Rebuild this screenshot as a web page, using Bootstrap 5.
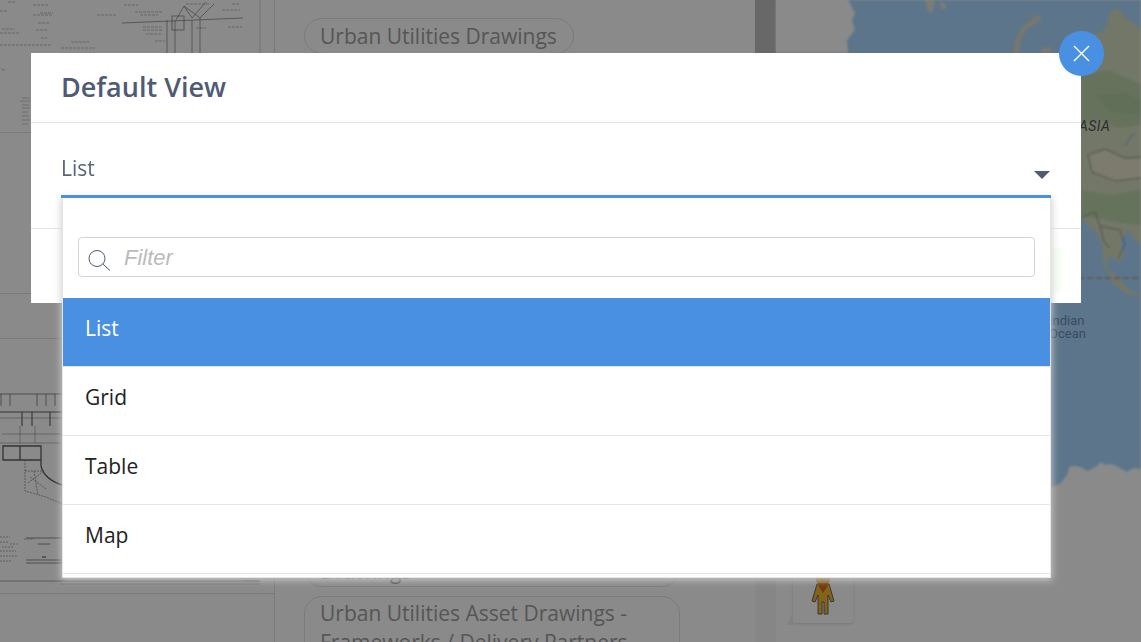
<!DOCTYPE html>
<html lang="en">
<head>
<meta charset="utf-8">
<title>Default View</title>
<link href="https://cdn.jsdelivr.net/npm/bootstrap@5.3.0/dist/css/bootstrap.min.css" rel="stylesheet">
<style>
html,body{height:100%;overflow:hidden}
body{font-family:"Open Sans",sans-serif;background:#fff}
.stage{height:642px;overflow:hidden}
.drawcol{width:275px;flex:none;border-right:1px solid #e2e2e2}
.sheet{border-bottom:1px solid #e2e2e2;overflow:hidden}
.sheet svg{display:block;filter:blur(.7px)}
.mapcol svg.mapsheet{display:block;filter:blur(.9px)}
.sheet-a{height:133px}
.sheet-b{height:161px}
.sheet-c{height:256px;margin-top:44px;border-top:1px solid #e2e2e2}
.pillcol{width:480px;flex:none;padding:18px 0 0 29px}
.tagpill{border:1px solid #e4e4e4;border-radius:18px;padding:2px 15px;font-size:21px;line-height:30px;color:#a0a0a0}
.tagpill-one{width:270px}
.tagpill-two{width:376px;height:60px;margin-top:473px;padding-top:0}
.tagpill-three{width:376px;margin-top:9px;padding-top:2px;line-height:29px}
.tagpill-two span{display:block;padding-top:29px;line-height:29px}
.scrolltrack{width:21px;flex:none;background:#f7f7f7}
.scrollthumb{height:300px;background:#c1c1c1}
.mapcol{flex:1 1 auto;position:relative;background:#fff}
.backdrop-layer{--bs-backdrop-opacity:.46;--bs-backdrop-bg:#000;width:100%;height:100%}
.viewdialog{max-width:1050px;margin:53px 0 0 31px}
.viewdialog .modal-content{height:250px;border:0;border-radius:0;color:#4f5a75}
.viewhead{height:70px;padding:0 30px 2px;border-bottom:1px solid #e5e5e5;border-radius:0}
.viewhead .modal-title{font-size:27px;font-weight:600;line-height:1;color:#4f5a75}
.viewbody{height:105px;flex:none;padding:0 30px}
.viewselect{height:75px;border-bottom:3px solid #4a90e2;padding-top:30px;font-size:21px;line-height:30px;position:relative;z-index:5;color:#5b6478}
.viewarrow{position:absolute;right:1px;top:48px;width:0;height:0;border-left:8.5px solid transparent;border-right:8.5px solid transparent;border-top:8.5px solid #4f5a75}
.viewfoot{height:75px;padding:15px;border-top:1px solid #e5e5e5;border-radius:0;justify-content:flex-end;flex:none}
.savebtn{width:130px;height:44px;background:#f6fff3;border:1px solid #f6fff3;border-radius:4px}
.closeround{position:absolute;right:-23px;top:-22px;width:45px;height:45px;border-radius:50%;background:#4a90e2;border:0;padding:0;z-index:5;display:flex;align-items:center;justify-content:center}
.viewmenu{position:absolute;left:31px;top:145px;width:989px;height:380px;background:#fff;border:1px solid #e5e5e5;border-top:0;box-shadow:0 1px 7px 1px rgba(205,205,205,.95);padding:39px 0 0;z-index:4}
.filterbox{margin:0 15px 21px 15px;height:40px;border:1px solid #d4d4d4;border-radius:4px;padding-left:9px;gap:13px}
.filterbox input{border:0;outline:0;flex:1;min-width:0;font-family:"Liberation Sans",sans-serif;font-style:italic;font-size:22px;color:#555;background:transparent;padding:0}
.filterbox input::placeholder{color:#bbb;opacity:1}
.viewopts{border-radius:0;--bs-list-group-border-width:0}
.viewopts .list-group-item{height:69px;padding:15px 22px;font-size:21px;line-height:30px;color:#222;border:0;border-bottom:1px solid #e5e5e5;border-radius:0}
.viewopts .list-group-item.active{background:#4a90e2;color:#fff;border-bottom-color:#e5e5e5}
.pegbox{position:absolute;left:17px;top:560px;width:60px;height:63px;background:#fff;border-radius:3px;box-shadow:0 1px 3px rgba(0,0,0,.15);display:flex;align-items:flex-end;justify-content:center;padding-bottom:7px}
.pegbox::before{content:"";position:absolute;left:-6px;bottom:-2px;width:0;height:0;border-bottom:12px solid #efefef;border-left:6px solid transparent}
.asia-label{position:absolute;left:303px;top:118px;font:italic 400 14px/16px Roboto,sans-serif;letter-spacing:.4px;color:#555}
.ocean-label{position:absolute;left:273px;top:314px;font:13px/13px Roboto,sans-serif;color:#6a8ab4}
</style>
</head>
<body>
<div class="stage d-flex">
  <div class="drawcol">
    <div class="sheet sheet-a">
      <svg width="274" height="132" viewBox="0 0 274 132" fill="none" stroke="#222" stroke-width=".7" opacity=".6">
        <path d="M122 23 243 18M167 20V53M175 20V53M192 20V53M200 18V53M176 20 184 6 192 18 206 2M184 6 200 18 214 4"/>
        <path stroke-width="1.1" d="M172 16h12v14h-12z" opacity=".7"/>
        <path opacity=".7" stroke-dasharray="3 1" d="M8 2h8M33 5h16M0 11h8M40 13h13M33 15h20M38 23h11M2 29h13M0 33h20M36 30h11M41 38h6M0 45h52M61 48h34M71 42h18M140 15h18M124 5h14M186 4h24M135 12h28M97 15h20M143 27h18M143 30h20M146 34h16M155 41h10M222 10h18M232 4h8M228 27h14M196 28h10"/>
        <path opacity=".55" d="M22 98h8M20 101h10M22 105h7M22 108h8M22 112h6M22 116h7M22 120h8M22 124h6M80 60h22M60 58h20M2 68v2h3"/>
        <path d="M260 0V132" stroke="#333" stroke-width=".6" opacity=".6"/>
      </svg>
    </div>
    <div class="sheet sheet-b"></div>
    <div class="sheet sheet-c">
      <svg width="274" height="254" viewBox="0 338 274 254" fill="none" stroke="#1c1c1c" stroke-width=".7" opacity=".7">
        <path d="M0 393H64M1 393V405M10 393V405M37 393V405M46 393V405M55 393V405"/>
        <path stroke-width="1.1" d="M0 411H62M22 411V425M32 411V425M50 411V425"/>
        <path opacity=".6" d="M0 417H62M2 433H62M20 425V442M35 425V442M0 442H62"/>
        <path stroke-width="1.3" d="M3 445H41V459H3ZM20 445V459M41 445V465Q44 478 62 484"/>
        <path opacity=".8" stroke-dasharray="2 1" d="M25 459V490L46 496 62 503M25 470H44M28 482 44 470M34 470 38 494M30 476 46 488"/>
        <path opacity=".7" stroke-dasharray="2 1" d="M0 536H10M0 541H8M2 546H14M0 550H16M0 555H18M0 560H12M24 538H34M10 543H18"/>
        <path d="M26 537H62M26 559H62M26 562H62M38 543H50"/>
        <path stroke-width="1.2" d="M42 556h4"/>
        <path opacity=".8" d="M0 580H260"/>
        <path opacity=".4" d="M60 583H260M240 577H260M243 580H258"/>
      </svg>
    </div>
  </div>
  <div class="pillcol">
    <div class="tagpill tagpill-one">Urban Utilities Drawings</div>
    <div class="tagpill tagpill-two"><span>Drawings</span></div>
    <div class="tagpill tagpill-three">Urban Utilities Asset Drawings - Frameworks / Delivery Partners</div>
  </div>
  <div class="scrolltrack"><div class="scrollthumb"></div></div>
  <div class="mapcol">
    <svg class="mapsheet" width="365" height="642" viewBox="776 0 365 642" fill="none">
      <rect x="776" y="0" width="365" height="642" fill="#abd9ff"/>
      <path fill="#fff" d="M776 0H848L855 13 852 20 855 30 847 40 848 53 776 53Z"/>
      <path fill="#e4e4da" d="M925 0h10l-3 14-4-3ZM940 2l5 1 1 6-5 0Z"/>
      <path fill="#dfdccb" d="M1013 53 1015 40 1022 27 1036 16 1041 15 1040 20 1026 30 1020 42 1019 53Z"/>
      <path fill="#dfdccb" d="M1042 53V47L1050 47 1052 53Z"/>
      <path fill="#d3ddc0" d="M1060 53 1075 42 1087 36 1100 33 1106 28 1110 12 1118 8 1125 18 1135 24 1141 30V245L1133 238 1128 230 1120 242 1124 256 1118 262 1111 256 1106 262 1108 272 1118 288 1112 280 1104 268 1102 245 1096 232 1086 224 1081 216 1060 200Z"/>
      <path fill="#bcd3ab" d="M1081 75 1110 70 1141 85V125L1118 128 1100 120 1081 125Z"/>
      <path fill="#b4cea3" d="M1095 95 1125 92 1141 100V115L1110 112Z"/>
      <path fill="#e8e3cb" d="M1088 155 1105 150 1125 160 1141 158V178L1115 182 1092 172Z"/>
      <path fill="#bcd4ab" d="M1081 190 1110 195 1141 190V225L1115 222 1081 215Z"/>
      <path fill="#d3ddc0" d="M1108 268 1120 280 1132 292 1126 294 1112 282Z"/>
      <path fill="#d3ddc0" d="M1126 290l15 4v2l-12-2Z"/>
      <path stroke="#777" stroke-width=".7" d="M1088 155 1105 149 1125 158 1141 157M1088 155 1092 172 1115 181 1141 178M1081 218 1095 212 1100 226 1110 228 1120 230 1125 245 1118 258M1100 226 1104 242 1110 248"/>
      <path stroke="#7fb0e0" stroke-width="1" d="M1125 146 1131 136 1135 133"/>
      <path stroke="#c06a6a" stroke-width="1" stroke-dasharray="6 3" d="M1051 278H1141"/>
      <path fill="#fff" d="M1051 488 1056 485 1061 483 1068 473 1069 467 1075 466 1080 467 1088 471 1097 466 1101 462 1105 465 1112 464 1118 467 1127 472 1134 468 1141 469V642H776V488Z"/>
    </svg>
    <span class="asia-label">ASIA</span>
    <span class="ocean-label">Indian<br>Ocean</span>
    <div class="pegbox">
      <svg width="26" height="42" viewBox="0 0 26 42">
        <circle cx="13" cy="5" r="7" fill="#f4b52a"/>
        <path fill="#f4b52a" stroke="#666" stroke-width="1" d="M7 10H19L24 27 21 28 18 21V40H14V28H12V40H8V21L5 28 2 27Z"/>
        <path fill="#d36a1d" d="M7 10H19L13 19Z"/>
      </svg>
    </div>
  </div>
</div>

<div class="modal-backdrop show backdrop-layer"></div>

<div class="modal d-block" tabindex="-1" role="dialog">
  <div class="modal-dialog viewdialog">
    <div class="modal-content">
      <button type="button" class="closeround" aria-label="Close">
        <svg width="17" height="17" viewBox="0 0 17 17" stroke="#fff" stroke-width="1.4" fill="none"><path d="M1 1 16 16M16 1 1 16"/></svg>
      </button>
      <div class="modal-header viewhead">
        <h5 class="modal-title">Default View</h5>
      </div>
      <div class="modal-body viewbody">
        <div class="viewselect">List<span class="viewarrow"></span></div>
      </div>
      <div class="modal-footer viewfoot">
        <div class="savebtn"></div>
      </div>
      <div class="viewmenu">
        <div class="filterbox d-flex align-items-center">
          <svg width="23" height="27" viewBox="0 0 23 27" fill="none" stroke="#4f5a75" stroke-width="1"><circle cx="9" cy="14.5" r="8"/><path d="M14.8 20 22 26.5"/></svg>
          <input type="text" placeholder="Filter" aria-label="Filter">
        </div>
        <div class="list-group viewopts">
          <div class="list-group-item active">List</div>
          <div class="list-group-item">Grid</div>
          <div class="list-group-item">Table</div>
          <div class="list-group-item">Map</div>
        </div>
      </div>
    </div>
  </div>
</div>
<script src="https://cdn.jsdelivr.net/npm/bootstrap@5.3.0/dist/js/bootstrap.bundle.min.js"></script>
</body>
</html>
